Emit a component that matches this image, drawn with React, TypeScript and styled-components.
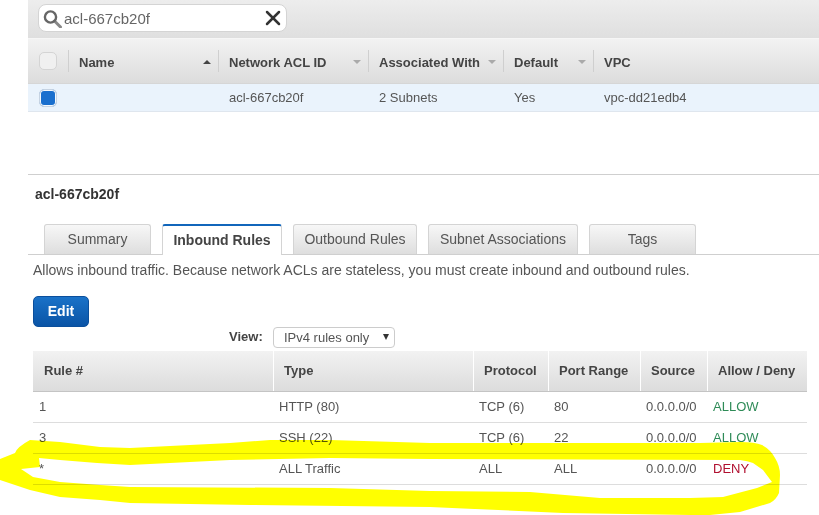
import React from 'react'
import styled, { createGlobalStyle } from 'styled-components'
import { X } from 'lucide-react'

const listColumns = '40px 150px 150px 135px 90px 1fr'
const ruleColumns = '240px 200px 75px 92px 67px 100px'

const tabs = ['Summary', 'Inbound Rules', 'Outbound Rules', 'Subnet Associations', 'Tags']

const rules = [
  { no: '1', type: 'HTTP (80)', protocol: 'TCP (6)', port: '80', source: '0.0.0.0/0', action: 'ALLOW' },
  { no: '3', type: 'SSH (22)', protocol: 'TCP (6)', port: '22', source: '0.0.0.0/0', action: 'ALLOW' },
  { no: '*', type: 'ALL Traffic', protocol: 'ALL', port: 'ALL', source: '0.0.0.0/0', action: 'DENY' },
]

const App: React.FC = () => {
  return (
    <Page>
      <GlobalStyle />
      <ListPane>
        <Toolbar>
          <SearchBox>
            <svg width="20" height="20" viewBox="0 0 20 20" fill="none">
              <line x1="11.5" y1="13" x2="17.5" y2="19" stroke="#888" strokeWidth="3" strokeLinecap="round" />
              <circle cx="7.5" cy="9" r="5.6" stroke="#666" strokeWidth="2.4" />
            </svg>
            <SearchText>acl-667cb20f</SearchText>
            <X size={24} strokeWidth={2.5} color="#333" />
          </SearchBox>
        </Toolbar>
        <ListHead>
          <CheckCell><CheckBox /></CheckCell>
          <ListHeadCell>Name<SortArrow $up /></ListHeadCell>
          <ListHeadCell>Network ACL ID<SortArrow /></ListHeadCell>
          <ListHeadCell>Associated With<SortArrow /></ListHeadCell>
          <ListHeadCell>Default<SortArrow /></ListHeadCell>
          <ListHeadCell>VPC</ListHeadCell>
        </ListHead>
        <ListRow>
          <CheckCell><CheckBox $checked /></CheckCell>
          <ListCell />
          <ListCell>acl-667cb20f</ListCell>
          <ListCell>2 Subnets</ListCell>
          <ListCell>Yes</ListCell>
          <ListCell>vpc-dd21edb4</ListCell>
        </ListRow>
      </ListPane>

      <DetailPane>
        <Title>acl-667cb20f</Title>
        <TabBar>
          {tabs.map((t) => (
            <Tab key={t} $active={t === 'Inbound Rules'}>{t}</Tab>
          ))}
        </TabBar>
        <Body>
          <Description>
            Allows inbound traffic. Because network ACLs are stateless, you must create inbound and outbound rules.
          </Description>
          <EditButton>Edit</EditButton>
          <ViewRow>
            <ViewLabel>View:</ViewLabel>
            <ViewSelect>IPv4 rules only<SelectArrow /></ViewSelect>
          </ViewRow>
          <RuleHead>
            <RuleHeadCell>Rule #</RuleHeadCell>
            <RuleHeadCell>Type</RuleHeadCell>
            <RuleHeadCell>Protocol</RuleHeadCell>
            <RuleHeadCell>Port Range</RuleHeadCell>
            <RuleHeadCell>Source</RuleHeadCell>
            <RuleHeadCell>Allow / Deny</RuleHeadCell>
          </RuleHead>
          {rules.map((r) => (
            <RuleRow key={r.no}>
              <RuleCell>{r.no}</RuleCell>
              <RuleCell>{r.type}</RuleCell>
              <RuleCell>{r.protocol}</RuleCell>
              <RuleCell>{r.port}</RuleCell>
              <RuleCell>{r.source}</RuleCell>
              <ActionCell $deny={r.action === 'DENY'}>{r.action}</ActionCell>
            </RuleRow>
          ))}
        </Body>
      </DetailPane>

      {/* yellow marker scribble round the DENY row */}
      <Scribble viewBox="0 0 819 515" width="819" height="515">
        <path
          fillRule="evenodd"
          fill="#ffff00"
          d="M0 459 L15 453 Q17 447 30 440 L60 442 L100 447 L130 448 L230 443 L270 440 L330 440 L430 443 L700 443 L740 442 Q755 442 762 445 Q771 450 775 458 Q780 466 780 475 L779 493 Q776 500 770 503 L740 512 L710 515 L690 515 L563 513 L430 507 L250 505 L130 503 L100 500 L60 497 L30 490 L0 480 Z
             M21 469 L40 467 L39 458 L60 460 L97 463 L130 465 L230 460 L330 458 L430 459 L740 460 Q748 461 753 463 L763 470 L772 482 L757 488 L723 497 L690 498 L600 498 L530 492 L430 491 L330 488 L130 487 L100 485 L60 482 L33 477 Z"
        />
      </Scribble>
    </Page>
  )
}

export default App

const GlobalStyle = createGlobalStyle`
  html, body {
    margin: 0;
    background: #fff;
  }
`

const Page = styled.div`
  position: relative;
  width: 819px;
  height: 515px;
  overflow: hidden;
  font-family: 'Liberation Sans', Arial, sans-serif;
  font-size: 14px;
  color: #444;
`

const ListPane = styled.div`
  margin-left: 28px;
`

const Toolbar = styled.div`
  height: 34px;
  padding-top: 4px;
  background: linear-gradient(#ededed, #dfdfdf);
  border-bottom: 1px solid #f6f6f6;
`

const SearchBox = styled.div`
  display: flex;
  align-items: center;
  width: 249px;
  height: 28px;
  margin-left: 10px;
  padding: 0 1px 0 4px;
  box-sizing: border-box;
  background: #fff;
  border: 1px solid #d4d4d4;
  border-radius: 8px;
`

const SearchText = styled.span`
  flex: 1;
  margin-left: 1px;
  font-size: 15px;
  color: #666;
`

const ListHead = styled.div`
  display: grid;
  grid-template-columns: ${listColumns};
  height: 44px;
  align-items: center;
  background: linear-gradient(#f2f2f2, #dcdcdc);
  border-bottom: 1px solid #d6d6d6;
`

const ListRow = styled.div`
  display: grid;
  grid-template-columns: ${listColumns};
  height: 27px;
  align-items: center;
  background: #eaf3fc;
  border-bottom: 1px solid #dfe6ee;
`

const CheckCell = styled.div`
  display: flex;
  align-items: center;
  padding-left: 11px;
`

const CheckBox = styled.span<{ $checked?: boolean }>`
  display: block;
  width: 18px;
  height: 18px;
  box-sizing: border-box;
  border: 1px solid ${(p) => (p.$checked ? '#c6d3e2' : '#d4d4d4')};
  border-radius: 5px;
  background: ${(p) => (p.$checked ? '#1a6fce' : '#f0f0f0')};
  ${(p) => p.$checked && 'box-shadow: inset 0 0 0 1px #f4f8fc;'}
`

const ListHeadCell = styled.div`
  display: flex;
  align-items: center;
  justify-content: space-between;
  height: 22px;
  padding: 2px 7px 0 10px;
  box-sizing: border-box;
  border-left: 1px solid #cfcfcf;
  font-size: 13px;
  font-weight: bold;
  white-space: nowrap;
`

const ListCell = styled.div`
  padding-left: 11px;
  font-size: 13px;
  color: #555;
  line-height: 27px;
`

const SortArrow = styled.span<{ $up?: boolean }>`
  width: 0;
  height: 0;
  border-left: 4px solid transparent;
  border-right: 4px solid transparent;
  ${(p) => (p.$up ? 'border-bottom: 4px solid #444;' : 'border-top: 4px solid #aaa;')}
`

const DetailPane = styled.div`
  margin-top: 62px;
  margin-left: 28px;
  border-top: 1px solid #cfcfcf;
`

const Title = styled.h2`
  margin: 0;
  padding: 11px 0 0 7px;
  height: 38px;
  font-size: 14px;
  line-height: 16px;
  font-weight: bold;
  color: #333;
`

const TabBar = styled.div`
  display: grid;
  grid-template-columns: 107px 120px 124px 150px 107px;
  column-gap: 11px;
  padding-left: 16px;
  border-bottom: 1px solid #cfcfcf;
`

const Tab = styled.div<{ $active?: boolean }>`
  height: 30px;
  box-sizing: border-box;
  text-align: center;
  line-height: 28px;
  border: 1px solid #d4d4d4;
  border-bottom: 0;
  border-radius: 3px 3px 0 0;
  ${(p) =>
    p.$active
      ? `
    height: 31px;
    margin-bottom: -1px;
    background: #fff;
    border-top: 2px solid #1166bb;
    font-weight: bold;
    color: #444;
  `
      : `
    background: linear-gradient(#f7f7f7, #dedede);
    color: #555;
  `}
`

const Body = styled.div`
  padding-left: 5px;
`

const Description = styled.p`
  margin: 0;
  padding-top: 7px;
  height: 34px;
  line-height: 16px;
  color: #555;
`

const EditButton = styled.button`
  display: block;
  width: 56px;
  height: 31px;
  padding: 0 0 2px;
  border: 1px solid #0b4f9c;
  border-radius: 5px;
  background: linear-gradient(#1a72c8, #0a54a6);
  color: #fff;
  font: bold 14px 'Liberation Sans', Arial, sans-serif;
`

const ViewRow = styled.div`
  display: flex;
  align-items: center;
  height: 21px;
  margin-bottom: 3px;
  padding-left: 196px;
  font-size: 13px;
`

const ViewLabel = styled.span`
  width: 44px;
  padding-bottom: 2px;
  font-weight: bold;
  color: #444;
`

const ViewSelect = styled.div`
  display: flex;
  align-items: center;
  justify-content: space-between;
  width: 122px;
  height: 21px;
  padding: 0 5px 1px 10px;
  box-sizing: border-box;
  border: 1px solid #ccc;
  border-radius: 4px;
  color: #555;
`

const SelectArrow = styled.span`
  width: 0;
  height: 0;
  border-left: 3.5px solid transparent;
  border-right: 3.5px solid transparent;
  border-top: 6px solid #333;
`

const RuleHead = styled.div`
  display: grid;
  grid-template-columns: ${ruleColumns};
  width: 774px;
  height: 41px;
  background: linear-gradient(#f2f2f2, #dcdcdc);
  border-bottom: 1px solid #c4c4c4;
  box-sizing: border-box;
  font-size: 13px;
`

const RuleHeadCell = styled.div`
  padding-left: 10px;
  border-left: 1px solid #fff;
  font-weight: bold;
  line-height: 40px;
  white-space: nowrap;
  &:first-child {
    padding-left: 11px;
    border-left: 0;
  }
`

const RuleRow = styled.div`
  display: grid;
  grid-template-columns: ${ruleColumns};
  width: 774px;
  height: 31px;
  box-sizing: border-box;
  border-bottom: 1px solid #ddd;
`

const RuleCell = styled.div`
  padding-left: 6px;
  line-height: 29px;
  font-size: 13px;
  color: #555;
`

const ActionCell = styled(RuleCell)<{ $deny?: boolean }>`
  color: ${(p) => (p.$deny ? '#b01030' : '#2e8b57')};
`

const Scribble = styled.svg`
  position: absolute;
  top: 0;
  left: 0;
  mix-blend-mode: multiply;
  pointer-events: none;
`
